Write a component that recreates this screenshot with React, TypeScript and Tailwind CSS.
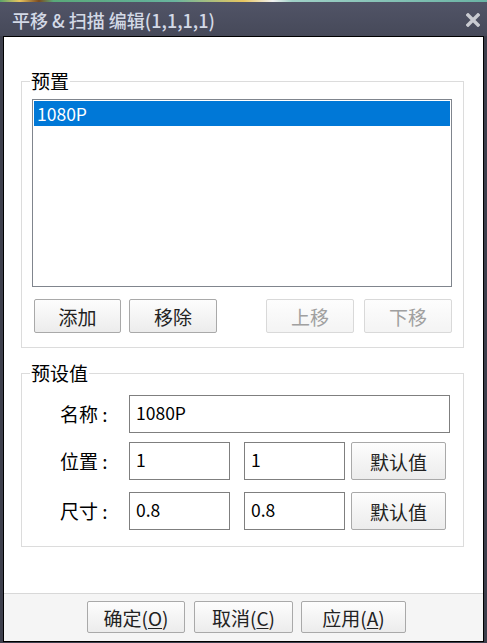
import React from "react";

const font = { fontFamily: '"Noto Sans CJK SC", "Noto Sans", sans-serif' };

function Btn({
  children,
  disabled = false,
  className = "",
}: {
  children: React.ReactNode;
  disabled?: boolean;
  className?: string;
}) {
  return (
    <button
      disabled={disabled}
      className={
        "flex items-center justify-center rounded-[2px] border bg-gradient-to-b from-[#fdfdfd] to-[#ececec] text-[19px] leading-none " +
        (disabled
          ? "border-[#d9d9d9] text-[#a0a0a0] from-[#fafafa] to-[#f4f4f4]"
          : "border-[#a9a9a9] text-[#222]") +
        " " +
        className
      }
    >
      {children}
    </button>
  );
}

function Field({ value, className = "" }: { value: string; className?: string }) {
  return (
    <input
      readOnly
      value={value}
      className={
        "h-[38px] border border-[#7f7f7f] bg-white px-[6px] pb-[3px] text-[17.5px] text-black outline-none " +
        className
      }
    />
  );
}

function Group({
  title,
  className = "",
  children,
}: {
  title: string;
  className?: string;
  children: React.ReactNode;
}) {
  return (
    <div className={"mx-[17px] w-[443px] border border-[#dcdcdc] " + className}>
      <div className="-mt-[12px] ml-[8px] w-fit bg-white px-px text-[19px] leading-[22px] text-black">
        {title}
      </div>
      {children}
    </div>
  );
}

export default function App() {
  return (
    <div className="flex h-[643px] w-[487px] flex-col bg-[#3d3f4c]" style={font}>
      <div className="h-[2px] bg-[linear-gradient(90deg,#5aa46a_0%,#e9c55e_4%,#7a4a20_8%,#59a97a_11%,#62b096_30%,#6ab59e_36%,#e8c660_50%,#f2f2f2_56%,#9fd0c7_60%,#6ab3a4_100%)]" />
      <div className="flex h-[34px] items-center justify-between bg-gradient-to-b from-[#515467] to-[#464959] pl-[12px] pr-[7px] pt-[3px]">
        <span className="text-[18px] font-medium text-[#d3d9e6]">
          平移 &amp; 扫描 编辑(1,1,1,1)
        </span>
        <svg width="14" height="14" viewBox="0 0 14 14" className="-mt-[2px]">
          <path
            d="M2 2 L12 12 M12 2 L2 12"
            stroke="#c9cbd1"
            strokeWidth="3.4"
            strokeLinecap="square"
          />
        </svg>
      </div>
      <div className="mx-[3px] flex h-[606px] flex-col border border-black">
        <div className="flex flex-1 flex-col bg-white">
          <Group title="预置" className="mt-[44px]">
            <div className="ml-[10px] mt-[7px] h-[188px] w-[420px] border border-[#80858d] p-px">
              <div className="h-[25px] bg-[#0078d7] pl-[3px] text-[17.5px] leading-[25px] text-white">
                1080P
              </div>
            </div>
            <div className="ml-[12px] mt-[12px] mb-[14px] flex">
              <Btn className="h-[34px] w-[87px]">添加</Btn>
              <Btn className="ml-[8px] h-[34px] w-[88px]">移除</Btn>
              <Btn disabled className="ml-[49px] h-[34px] w-[88px]">
                上移
              </Btn>
              <Btn disabled className="ml-[10px] h-[34px] w-[88px]">
                下移
              </Btn>
            </div>
          </Group>
          <Group title="预设值" className="mt-[25px]">
            <div className="mb-[16px] mt-[11px] flex flex-col gap-[9px] pl-[38px]">
              <div className="flex items-center">
                <span className="w-[69px] text-[19px] text-black">名称 :</span>
                <Field value="1080P" className="w-[321px]" />
              </div>
              <div className="flex items-center">
                <span className="w-[69px] text-[19px] text-black">位置 :</span>
                <Field value="1" className="w-[101px]" />
                <Field value="1" className="ml-[14px] w-[101px]" />
                <Btn className="ml-[6px] h-[38px] w-[95px]">默认值</Btn>
              </div>
              <div className="mt-[3px] flex items-center">
                <span className="w-[69px] text-[19px] text-black">尺寸 :</span>
                <Field value="0.8" className="w-[101px]" />
                <Field value="0.8" className="ml-[14px] w-[101px]" />
                <Btn className="ml-[6px] h-[38px] w-[95px]">默认值</Btn>
              </div>
            </div>
          </Group>
        </div>
        <div className="flex h-[48px] border-t border-[#d8d8d8] bg-[#f5f5f5] pl-[83px] pt-[7px]">
          <Btn className="h-[32px] w-[98px]">
            确定(<span className="underline underline-offset-2">O</span>)
          </Btn>
          <Btn className="ml-[9px] h-[32px] w-[99px]">
            取消(<span className="underline underline-offset-2">C</span>)
          </Btn>
          <Btn className="ml-[8px] h-[32px] w-[105px]">
            应用(<span className="underline underline-offset-2">A</span>)
          </Btn>
        </div>
      </div>
    </div>
  );
}
